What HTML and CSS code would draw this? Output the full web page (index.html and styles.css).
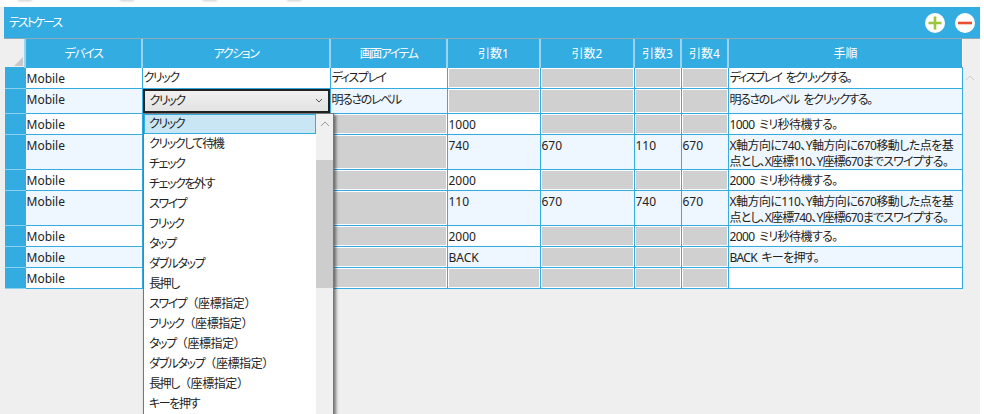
FILE: index.html
```html
<!DOCTYPE html>
<html lang="ja">
<head>
<meta charset="utf-8">
<title>テストケース</title>
<link rel="stylesheet" href="styles.css">
</head>
<body>
<div class="smudges"><i></i><i></i><i></i><i></i></div>
<div class="panel">
  <div class="titlebar">
    <span class="title">テストケース</span>
    <div class="tools">
      <svg class="tool" viewBox="0 0 20 20"><circle cx="10" cy="10" r="10" fill="#fff"/><path d="M10 3.5v13M3.5 10h13" stroke="#9cc33c" stroke-width="2.6"/></svg>
      <svg class="tool" viewBox="0 0 20 20"><circle cx="10" cy="10" r="10" fill="#fff"/><path d="M3 10h14" stroke="#e8512f" stroke-width="2.6"/></svg>
    </div>
  </div>
  <div class="body">
    <table class="grid">
      <colgroup>
        <col class="c0"><col class="c1"><col class="c2"><col class="c3"><col class="c4"><col class="c5"><col class="c6"><col class="c7"><col class="c8">
      </colgroup>
      <thead>
        <tr class="hr"><th class="corner"><span class="tri"></span></th><th class="ja">デバイス</th><th class="ja">アクション</th><th class="ja">画面アイテム</th><th>引数1</th><th>引数2</th><th>引数3</th><th>引数4</th><th>手順</th></tr>
      </thead>
      <tbody>
        <tr class="r21"><th></th><td>Mobile</td><td class="ka tight">クリック</td><td class="ka tight">ディスプレイ</td><td class="off"></td><td class="off"></td><td class="off"></td><td class="off"></td><td class="ka tight first-step">ディスプレイ をクリックする。</td></tr>
        <tr class="r25 alt"><th></th><td>Mobile</td><td class="combo-cell"><div class="combo"><span class="ka-inline">クリック</span><svg class="chev" viewBox="0 0 8 5"><path d="M1 1l3 3 3-3" fill="none" stroke="#555" stroke-width="1"/></svg></div></td><td class="ka">明るさのレベル</td><td class="off"></td><td class="off"></td><td class="off"></td><td class="off"></td><td class="ka">明るさのレベル をクリックする。</td></tr>
        <tr class="r21"><th></th><td>Mobile</td><td></td><td class="off"></td><td>1000</td><td class="off"></td><td class="off"></td><td class="off"></td><td class="mix">1000 ミリ秒待機する。</td></tr>
        <tr class="r35 alt"><th></th><td>Mobile</td><td></td><td class="off"></td><td>740</td><td>670</td><td>110</td><td>670</td><td class="long"><div class="two-line">X軸方向に740、Y軸方向に670移動した点を基<br><span class="second">点とし、X座標110、Y座標670までスワイプする。</span></div></td></tr>
        <tr class="r21"><th></th><td>Mobile</td><td></td><td class="off"></td><td>2000</td><td class="off"></td><td class="off"></td><td class="off"></td><td class="mix">2000 ミリ秒待機する。</td></tr>
        <tr class="r35 alt"><th></th><td>Mobile</td><td></td><td class="off"></td><td>110</td><td>670</td><td>740</td><td>670</td><td class="long"><div class="two-line">X軸方向に110、Y軸方向に670移動した点を基<br><span class="second">点とし、X座標740、Y座標670までスワイプする。</span></div></td></tr>
        <tr class="r21"><th></th><td>Mobile</td><td></td><td class="off"></td><td>2000</td><td class="off"></td><td class="off"></td><td class="off"></td><td class="mix">2000 ミリ秒待機する。</td></tr>
        <tr class="r21 alt"><th></th><td>Mobile</td><td></td><td class="off"></td><td>BACK</td><td class="off"></td><td class="off"></td><td class="off"></td><td class="back">BACK キーを押す。</td></tr>
        <tr class="r21"><th></th><td>Mobile</td><td></td><td class="off"></td><td class="off"></td><td class="off"></td><td class="off"></td><td class="off"></td><td></td></tr>
      </tbody>
    </table>
    <svg class="side-arrow" viewBox="0 0 10 6"><path d="M1 5l4-4 4 4" fill="none" stroke="#cfcfcf" stroke-width="1"/></svg>
    <div class="dropdown">
      <ul class="list">
        <li class="sel"><span class="ka-inline">クリック</span></li>
        <li><span class="ka-inline">クリックして待機</span></li>
        <li><span class="ka-inline">チェック</span></li>
        <li><span class="ka-inline">チェックを外す</span></li>
        <li><span class="ka-inline">スワイプ</span></li>
        <li><span class="ka-inline">フリック</span></li>
        <li><span class="ka-inline">タップ</span></li>
        <li><span class="ka-inline">ダブルタップ</span></li>
        <li><span class="ka-inline">長押し</span></li>
        <li><span class="ka-inline">スワイプ</span><span class="paren">（座標指定）</span></li>
        <li><span class="ka-inline">フリック</span><span class="paren">（座標指定）</span></li>
        <li><span class="ka-inline">タップ</span><span class="paren">（座標指定）</span></li>
        <li><span class="ka-inline">ダブルタップ</span><span class="paren">（座標指定）</span></li>
        <li><span class="ka-inline">長押し</span><span class="paren">（座標指定）</span></li>
        <li><span class="ka-inline">キーを押す</span></li>
      </ul>
      <div class="scroll">
        <svg class="up" viewBox="0 0 10 6"><path d="M1 5l4-4 4 4" fill="none" stroke="#9a9a9a" stroke-width="1"/></svg>
        <div class="thumb"></div>
      </div>
    </div>
  </div>
</div>
</body>
</html>
```
FILE: styles.css
```css
* { box-sizing: border-box; }
html, body { margin: 0; height: 100%; overflow: hidden; background: #fff; }
body { position: relative; padding: 7px 4px 0 4px; font-family: "Noto Sans", "Noto Sans CJK JP", sans-serif; font-size: 12px; color: #222; font-feature-settings: "palt"; }
.smudges { position: absolute; left: 0; top: 0; width: 310px; height: 3px; overflow: hidden; }
.smudges i { position: absolute; top: -1px; width: 14px; height: 2px; background: #c8c8c8; filter: blur(1px); }
.smudges i:nth-child(1) { left: 18px; }
.smudges i:nth-child(2) { left: 120px; }
.smudges i:nth-child(3) { left: 203px; }
.smudges i:nth-child(4) { left: 287px; }
.panel { height: 407px; display: flex; flex-direction: column; background: #efefef; box-shadow: -4px 0 0 #efefef; }
.titlebar { height: 31px; flex: none; background: #33ace2; color: #fff; display: flex; align-items: center; justify-content: space-between; padding: 0 5px 2px 5px; }
.title { font-size: 12px; letter-spacing: -2px; }
.tools { display: flex; gap: 10px; margin-top: 2px; }
.tool { width: 20px; height: 20px; display: block; }
.body { position: relative; flex: 1; border-top: 1px solid #8fa9b8; padding-left: 1px; }
.grid { border-collapse: collapse; table-layout: fixed; width: 957px; background: #fff; }
.c0 { width: 20px; } .c1 { width: 117px; } .c2 { width: 188px; } .c3 { width: 117px; } .c4 { width: 93px; } .c5 { width: 94px; } .c6 { width: 47px; } .c7 { width: 47px; } .c8 { width: 234px; }
.hr { height: 28px; }
.hr th { background: #33ace2; color: #fff; font-weight: 400; font-size: 12px; border-left: 2px solid #99d5f0; padding: 0; }
.hr th.ja { letter-spacing: -1.5px; }
.hr th:first-child { border-left: 0; }
.hr .corner { background: #efefef; position: relative; }
.tri { position: absolute; right: 1px; bottom: 1px; width: 0; height: 0; border-style: solid; border-width: 0 0 9px 9px; border-color: transparent transparent #c8c8c8 transparent; }
tbody th { background: #33ace2; border-bottom: 1px solid #8fd0ee; padding: 0; }
td { border: 1px solid #33ace2; padding: 3px 1px 0 1px; vertical-align: top; line-height: 16px; background: #fff; overflow: hidden; white-space: nowrap; }
td.tight { padding-top: 2px; }
td.ka, .ka-inline { letter-spacing: -1.4px; }
td.first-step { letter-spacing: -1.8px; word-spacing: 3px; }
td.ka:last-child { word-spacing: 3px; }
td.mix { letter-spacing: -0.6px; word-spacing: 2px; }
td.back { letter-spacing: -0.7px; word-spacing: 2px; }
td.long { letter-spacing: -0.55px; }
.two-line { margin-bottom: -1px; }
.second { letter-spacing: -0.85px; }
.alt td { background: #eef7ff; }
td.off, .alt td.off { background: #d0d0d0; box-shadow: inset 0 0 0 1px #fff; }
.r21 { height: 21px; } .r25 { height: 25px; } .r35 { height: 35px; }
td.combo-cell { padding: 0; position: relative; }
.combo { height: 24px; background: linear-gradient(#f0f0f0, #e3e3e3); border: 2px solid #222; display: flex; align-items: center; justify-content: space-between; padding: 0 5px 0 5px; }
.chev { width: 8px; height: 5px; display: block; }
.dropdown { position: absolute; left: 139px; top: 74px; width: 191px; height: 332px; background: #fff; border: 1px solid #777; border-bottom: 0; box-shadow: 2px 2px 3px rgba(0,0,0,.5); display: flex; }
.list { flex: 1; margin: 0; padding: 0; list-style: none; overflow: hidden; }
.list li { height: 20px; line-height: 18px; padding: 0 4px; white-space: nowrap; border: 1px solid transparent; }
.list .sel { background: #c9e6f5; border-color: #33ace2; }
.paren { font-feature-settings: normal; letter-spacing: -0.4px; }
.scroll { width: 17px; background: #f0f0f0; padding-top: 7px; }
.up { width: 10px; height: 6px; display: block; margin: 0 auto; }
.thumb { height: 128px; margin-top: 33px; background: #cdcdcd; }
.side-arrow { position: absolute; left: 961px; top: 36px; width: 10px; height: 6px; }
```
